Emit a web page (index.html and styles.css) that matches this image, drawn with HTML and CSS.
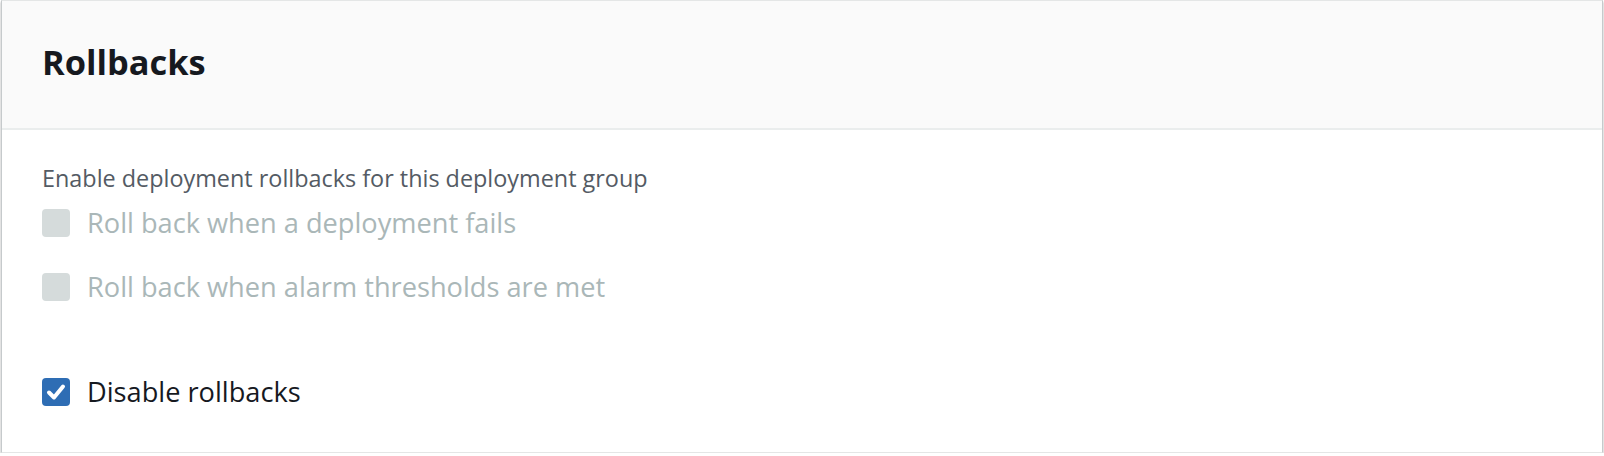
FILE: index.html
```html
<!DOCTYPE html>
<html>
<head>
<meta charset="utf-8">
<link rel="stylesheet" href="styles.css">
</head>
<body>
<div class="card">
  <div class="card-header">
    <h2 class="title">Rollbacks</h2>
  </div>
  <div class="card-body">
    <div class="desc">Enable deployment rollbacks for this deployment group</div>
    <div class="group">
      <label class="opt disabled"><span class="box"></span><span class="lbl">Roll back when a deployment fails</span></label>
      <label class="opt disabled"><span class="box"></span><span class="lbl">Roll back when alarm thresholds are met</span></label>
    </div>
    <label class="opt checked"><span class="box"><svg viewBox="0 0 28 28" width="28" height="28"><path d="M7 14.5 L12 19.5 L21 8.5" fill="none" stroke="#fff" stroke-width="4" stroke-linecap="round" stroke-linejoin="round"/></svg></span><span class="lbl">Disable rollbacks</span></label>
  </div>
</div>
</body>
</html>
```
FILE: styles.css
```css
html, body { margin: 0; padding: 0; background: #ffffff; }
body { font-family: "Open Sans", "Noto Sans", sans-serif; }
.card {
  margin: 0 1px 0 1px;
  height: 453px;
  box-sizing: border-box;
  border: 1px solid #e4e6e6;
  border-left-color: #c6cacc;
  border-right-color: #c6cacc;
  box-shadow: 0 2px 2px rgba(0,0,0,0.35);
  background: #fff;
}
.card-header {
  background: #fafafa;
  height: 129px;
  box-sizing: border-box;
  border-bottom: 2px solid #eaeded;
  padding: 41px 0 0 40px;
}
.title {
  margin: 0;
  font-size: 34.4px;
  line-height: 40px;
  font-weight: 700;
  color: #16191f;
}
.card-body { padding: 36px 40px 0 40px; }
.desc { font-size: 23.4px; color: #545b64; line-height: 24px; }
.group { display: flex; flex-direction: column; gap: 36px; margin-top: 19px; margin-bottom: 77px; }
.opt { display: flex; align-items: center; gap: 17px; font-size: 27.2px; line-height: 28px; }
.box { width: 28px; height: 28px; border-radius: 4px; box-sizing: border-box; display: inline-flex; flex: none; }
.disabled .box { background: #d5dbdb; }
.disabled .lbl { color: #aab7b8; }
.checked .box { background: #2e6db4; }
.checked .lbl { color: #16191f; }
```
